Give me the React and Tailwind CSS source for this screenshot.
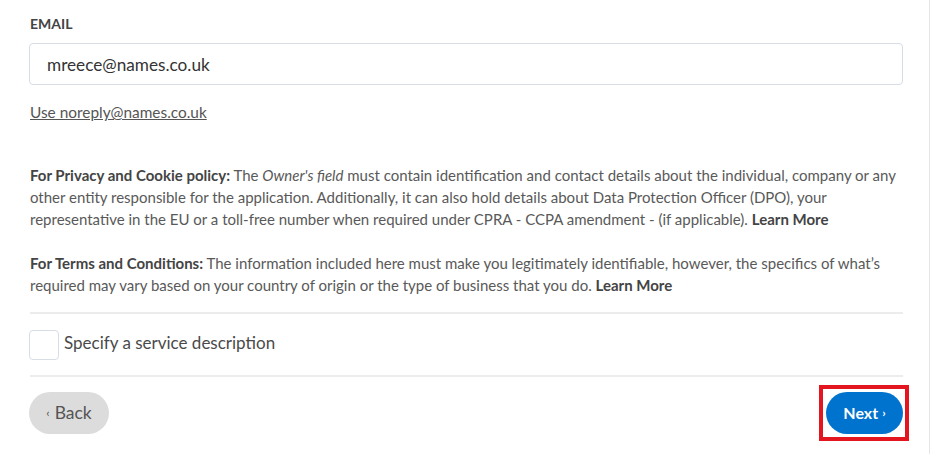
import React, { useState } from "react";

function App() {
  const [email, setEmail] = useState("mreece@names.co.uk");
  const [servicio, setServicio] = useState(false);

  return (
    <div className="w-[940px] h-[454px] bg-white overflow-hidden" style={{ fontFamily: "Lato, 'Noto Sans', sans-serif" }}>
      <div className="w-[930px] h-full border-r border-[#e6e6e6] pl-[30px] pr-[26px] pt-[14px]">
        <label className="block text-[14px] font-bold text-[#444] leading-[20px]">EMAIL</label>

        <input
          value={email}
          onChange={(e) => setEmail(e.target.value)}
          className="mt-[9px] -ml-px w-[874px] h-[42px] border border-[#d6dde4] rounded-[4px] px-[17px] text-[17.2px] text-[#333] outline-none"
        />

        <a href="#" className="block mt-[17px] text-[15.4px] text-[#555] underline leading-[20px]">
          Use noreply@names.co.uk
        </a>

        <p className="mt-[42px] text-[15px] leading-[22px] text-[#595959]">
          <b className="text-[#444]">For Privacy and Cookie policy:</b> The <i>Owner's field</i> must contain identification and contact details about the individual, company or any
          <br />
          other entity responsible for the application. Additionally, it can also hold details about Data Protection Officer (DPO), your
          <br />
          representative in the EU or a toll-free number when required under CPRA - CCPA amendment - (if applicable).{" "}
          <b className="text-[#444]">Learn More</b>
        </p>

        <p className="mt-[22px] text-[15px] leading-[22px] text-[#595959]">
          <b className="text-[#444]">For Terms and Conditions:</b> The information included here must make you legitimately identifiable, however, the specifics of what’s
          <br />
          required may vary based on your country of origin or the type of business that you do. <b className="text-[#444]">Learn More</b>
        </p>

        <div className="mt-[16px] border-t-2 border-[#ececec]" />

        <label className="flex items-center gap-[5px] h-[61px] cursor-pointer">
          <button
            onClick={() => setServicio(!servicio)}
            className="-ml-px w-[30px] h-[30px] border border-[#d6dde4] rounded-[4px] bg-white flex items-center justify-center text-[#0073ce]"
          >
            {servicio ? "✓" : ""}
          </button>
          <span className="text-[17px] leading-[20px] -mt-[3px] text-[#4a4a4a]">Specify a service description</span>
        </label>

        <div className="border-t-2 border-[#ececec]" />

        <div className="flex items-center justify-between mt-[15px]">
          <button className="-ml-px w-[80px] h-[42px] rounded-full bg-[#dcdcdc] text-[#555] text-[17.5px] flex items-center justify-center gap-[5px]">
            <span className="text-[12px]">‹</span>Back
          </button>
          <div className="relative">
            <button className="w-[77px] h-[42px] rounded-full bg-[#0073ce] text-white text-[16px] font-bold flex items-center justify-center gap-[4px]">
              Next<span className="text-[12px]">›</span>
            </button>
            <div className="absolute -left-[7px] -top-[7px] -right-[6px] -bottom-[7px] border-[4px] border-[#e3151f] pointer-events-none" />
          </div>
        </div>
      </div>
    </div>
  );
}

export default App;
